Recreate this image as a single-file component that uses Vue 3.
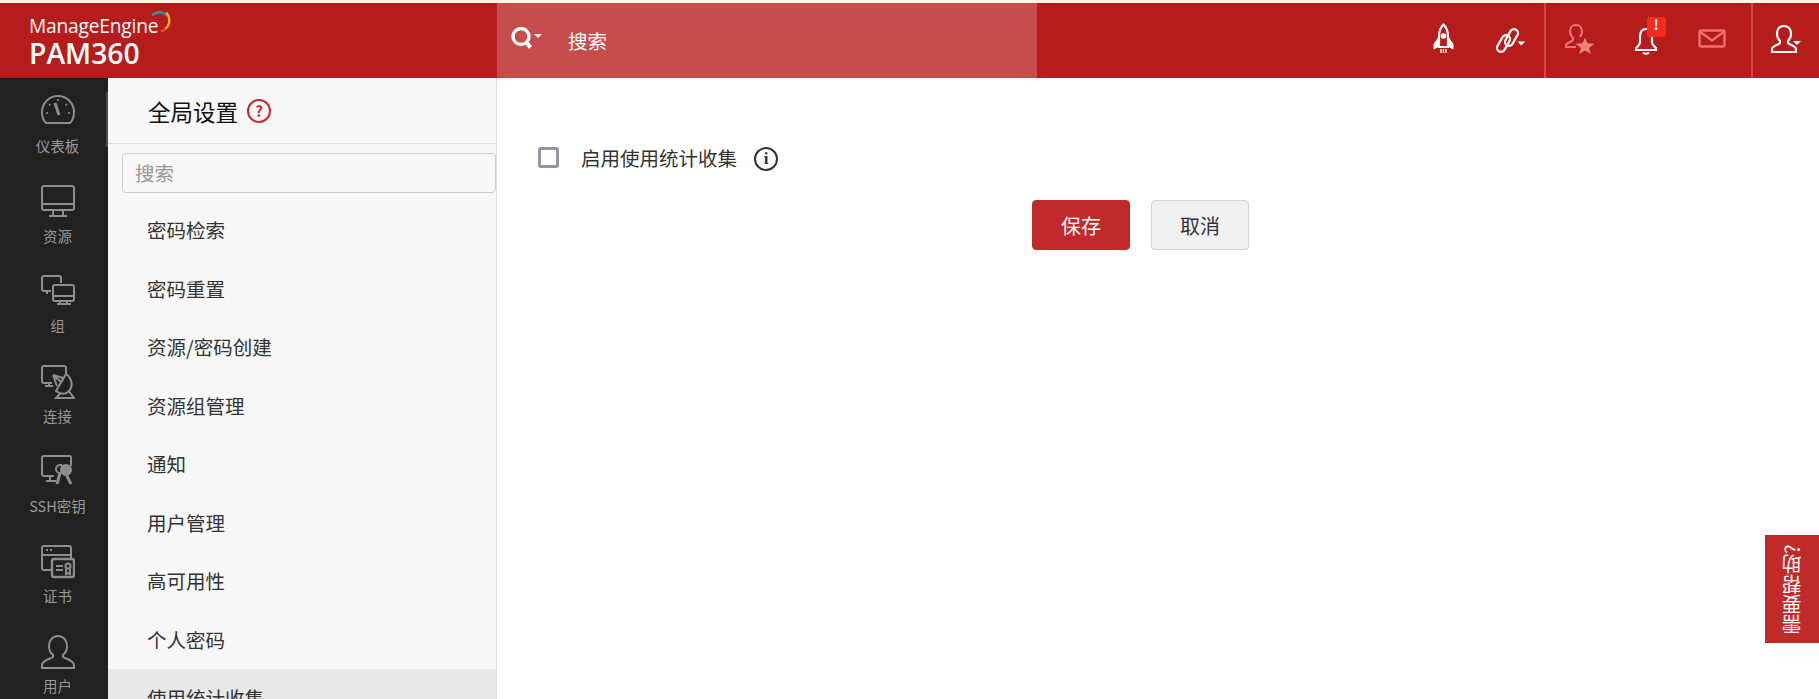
<script setup>
const navItems = [
  { key: 'dashboard', label: '仪表板' },
  { key: 'resource', label: '资源' },
  { key: 'group', label: '组' },
  { key: 'connect', label: '连接' },
  { key: 'ssh', label: 'SSH密钥' },
  { key: 'cert', label: '证书' },
  { key: 'user', label: '用户' },
];

const menuItems = [
  '密码检索',
  '密码重置',
  '资源/密码创建',
  '资源组管理',
  '通知',
  '用户管理',
  '高可用性',
  '个人密码',
  '使用统计收集',
];
</script>

<template>
  <div class="page">
    <div class="notice-strip" />

    <header class="topbar">
      <div class="logo">
        <div class="logo__brand">
          <span>ManageEngine</span>
          <svg class="logo__arc" viewBox="0 0 20 22" width="20" height="22" fill="none" stroke-width="2.400" aria-hidden="true">
            <path d="M1 4C4 1.500 8 .8 11 1.500" stroke="#3c9a94" />
            <path d="M11 1.500C13 2.200 14.500 3.500 15.500 5" stroke="#3f78c4" />
            <path d="M15 1.500C19.500 6 19.500 14 14 18" stroke="#f0b323" />
            <path d="M14.500 17.500C13.500 18.800 12 19.800 10 20.500" stroke="#e0532a" />
          </svg>
        </div>
        <div class="logo__product">PAM360</div>
      </div>

      <div class="global-search">
        <svg class="global-search__icon" viewBox="0 0 32 22" width="32" height="22" aria-hidden="true">
          <circle cx="10" cy="9.500" r="8" fill="none" stroke="#fff" stroke-width="3.400" />
          <path d="M15 15l4.500 5.500" stroke="#fff" stroke-width="4" />
          <path d="M23 7h8l-4 4z" fill="#fff" />
        </svg>
        <span>搜索</span>
      </div>

      <div class="topbar__spacer" />

      <div class="tool-group">
        <div class="tool">
          <svg viewBox="0 0 24 32" width="24" height="32" fill="none" stroke="#fff" stroke-width="2.200" aria-hidden="true">
            <path d="M12.500 1.500C9 5 8 9 8 13v11h9V13c0-4-1-8-4.500-11.500z" />
            <circle cx="12.500" cy="13" r="2.800" fill="#fff" stroke="none" />
            <path d="M8 14l-5 7v5l5-3zM17 14l5 7v5l-5-3z" fill="#fff" stroke-width="1" />
            <path d="M10 26v4M12.500 26v4M15 26v4" stroke-width="1.400" />
          </svg>
        </div>
        <div class="tool">
          <svg viewBox="0 0 34 32" width="34" height="32" aria-hidden="true">
            <g transform="translate(4.500 4.500)" fill="none" stroke="#fff" stroke-width="2.200">
              <rect x="12" y="1" width="8" height="18" rx="4" transform="rotate(30 16 10)" />
              <rect x="4" y="7" width="8" height="18" rx="4" transform="rotate(30 8 16)" />
            </g>
            <path d="M26.500 18.500h7.500l-3.750 4z" fill="#fff" />
          </svg>
        </div>
      </div>

      <div class="tool-group tool-group--mid">
        <div class="tool">
          <svg viewBox="0 0 32 32" width="32" height="32" fill="none" stroke="#ec7272" stroke-width="2.200" aria-hidden="true">
            <path d="M13 24H3v-2c0-2 6-3.500 7-5v-2c-2-2-3-4-3-7 0-3 2-6 6-6s6 3 6 6c0 3-1 4-2 6" />
            <path d="M22 14.500l2.500 5.800 7 .5-5.500 4.200 2 6-6-3.500-6 3.500 2-6-5.500-4.200 7-.5z" fill="#f08282" stroke="none" />
          </svg>
        </div>
        <div class="tool">
          <svg viewBox="0 0 24 32" width="24" height="32" fill="none" stroke="#fff" stroke-width="2.200" aria-hidden="true">
            <path d="M12 6C7 6 6 10 6 14v5c0 3-2 4-4 6v2h20v-2c-2-2-4-3-4-6v-5c0-4-1-8-6-8z" />
            <path d="M9 29.500c1 1.500 5 1.500 6 0" stroke-width="2" />
          </svg>
          <span class="tool__badge">!</span>
        </div>
        <div class="tool">
          <svg viewBox="0 0 28 20" width="28" height="20" fill="none" stroke="#ec7272" stroke-width="2.400" aria-hidden="true">
            <rect x="1.500" y="1.500" width="25" height="16" rx="1.500" />
            <path d="M2.500 3l11.500 8.500L25.500 3" />
          </svg>
        </div>
      </div>

      <div class="tool-group tool-group--end">
        <div class="tool">
          <svg viewBox="0 0 32 28" width="32" height="28" fill="none" stroke="#fff" stroke-width="2.200" aria-hidden="true">
            <path d="M14 1c-5 0-7 4-7 8 0 3 1 5 3 7v2c0 1-8 3-8 6v3h24v-3c0-3-8-5-8-6v-2c2-2 3-4 3-7 0-4-2-8-7-8z" />
            <path d="M23 16h8l-4 4z" fill="#fff" stroke="none" />
          </svg>
        </div>
      </div>
    </header>

    <div class="body">
      <nav class="rail">
        <span class="rail__edge" />
        <a v-for="item in navItems" :key="item.key" class="rail__item">
          <svg class="rail__icon" viewBox="0 0 34 34" width="34" height="34" fill="none" stroke="#8e8e8e" stroke-width="2" aria-hidden="true">
            <template v-if="item.key === 'dashboard'">
              <path d="M5 28C2 25 1 21 1 17A16 16 0 0 1 33 17C33 21 32 25 29 28Z" />
              <path d="M14 8l4 12" stroke-width="3" />
              <path d="M17 4v2M8 9l1.500 1.500M26 9l-1.500 1.500M5 18h2M27 18h2" stroke-width="1.500" />
            </template>
            <template v-else-if="item.key === 'resource'">
              <rect x="1" y="1" width="32" height="24" rx="2" />
              <path d="M1 19h32M12 25v6M22 25v6M8 31h18" />
            </template>
            <template v-else-if="item.key === 'group'">
              <path d="M10 16H3c-1 0-2-1-2-2V3c0-1 1-2 2-2h15c1 0 2 1 2 2v5" />
              <path d="M6 16v3" />
              <rect x="12" y="10" width="21" height="16" rx="2" />
              <path d="M12 21h21M19 26v3M26 26v3M16 29h14" />
            </template>
            <template v-else-if="item.key === 'connect'">
              <path d="M11 18H3c-1 0-2-1-2-2V3c0-1 1-2 2-2h20c1 0 2 1 2 2v6" />
              <path d="M8 18v3M4 21h8" />
              <path d="M25 9C31 13 33 22 27 27C23 30 19 29 15 26Z" />
              <path d="M12 10l8 7M12 10l10 3M12 10l4 11" />
              <path d="M19 29l-4 4h18l-6-8" />
            </template>
            <template v-else-if="item.key === 'ssh'">
              <path d="M13 21H3c-1 0-2-1-2-2V3c0-1 1-2 2-2h26c1 0 1 1 1 2v8" />
              <path d="M9 22v4M5 26h10" />
              <circle cx="19" cy="14" r="4" />
              <circle cx="25" cy="15" r="5" fill="#8e8e8e" />
              <path d="M19 18l-3 11M25 19l5 10" stroke-width="3" />
            </template>
            <template v-else-if="item.key === 'cert'">
              <path d="M11 25H3c-1 0-2-1-2-2V3c0-1 1-2 2-2h25c1 0 2 1 2 2v11" />
              <path d="M1 10h29M5 5h2M9 5h2" />
              <rect x="11" y="14" width="22" height="18" rx="2" stroke-width="2.400" />
              <path d="M15 21h7M15 25h7" />
              <circle cx="27" cy="21" r="2.500" />
              <path d="M25 24v5l2-1 2 1v-5" />
            </template>
            <template v-else>
              <path d="M17 1c-6 0-9 5-9 10 0 4 1.500 7 4 9v2c0 1-11 3-11 8v3h32v-3c0-5-11-7-11-8v-2c2.500-2 4-5 4-9 0-5-3-10-9-10z" />
            </template>
          </svg>
          <span class="rail__label">{{ item.label }}</span>
        </a>
      </nav>

      <aside class="settings">
        <div class="settings__head">
          <h1>全局设置</h1>
          <span class="settings__help">?</span>
        </div>
        <div class="settings__search">搜索</div>
        <ul class="settings__menu">
          <li
            v-for="(item, index) in menuItems"
            :key="item"
            :class="{ 'is-active': index === menuItems.length - 1 }"
          >
            {{ item }}
          </li>
        </ul>
      </aside>

      <main class="content">
        <label class="usage-row">
          <span class="usage-row__box" />
          <span class="usage-row__text">启用使用统计收集</span>
          <span class="usage-row__info">i</span>
        </label>
        <div class="actions">
          <button class="btn btn--primary" type="button">保存</button>
          <button class="btn" type="button">取消</button>
        </div>
      </main>
    </div>

    <div class="feedback-tab">需要帮助?</div>
  </div>
</template>

<style>
html,
body {
  margin: 0;
  overflow: hidden;
  background: #ffffff;
}
</style>

<style scoped>
.page {
  position: relative;
  height: 699px;
  overflow: hidden;
  font-family: "Noto Sans CJK SC", "Noto Sans", sans-serif;
}

.notice-strip {
  height: 3px;
  background: #fdf8e2;
}

.topbar {
  display: flex;
  height: 75px;
  background: #b51c1b;
}

.logo {
  width: 497px;
  padding: 10px 0 0 29px;
  box-sizing: border-box;
  color: #ffffff;
}

.logo__brand {
  display: flex;
  align-items: flex-start;
  height: 25px;
  font-family: "Open Sans", sans-serif;
  font-size: 19.200px;
  line-height: 25px;
  letter-spacing: -0.200px;
}

.logo__arc {
  flex: none;
  margin: -2px 0 0 -7px;
}

.logo__product {
  font-family: "Open Sans", sans-serif;
  font-size: 28.300px;
  line-height: 30px;
  font-weight: 600;
}

.global-search {
  display: flex;
  align-items: center;
  width: 540px;
  padding-left: 14px;
  box-sizing: border-box;
  background: #c74d4c;
  color: #ffffff;
  font-size: 19.500px;
}

.global-search__icon {
  margin: -6px 25px 0 0;
}

.topbar__spacer {
  flex: 1;
}

.tool-group {
  display: flex;
  padding-right: 4px;
}

.tool-group--mid {
  width: 207px;
  padding: 0;
  box-sizing: border-box;
  border-left: 2px solid #cb4a48;
}

.tool-group--end {
  width: 68px;
  padding: 0;
  box-sizing: border-box;
  border-left: 2px solid #cb4a48;
}

.tool {
  position: relative;
  display: flex;
  align-items: center;
  justify-content: center;
  width: 65px;
  padding-bottom: 4px;
  box-sizing: border-box;
}

.tool-group--mid .tool {
  width: 66.500px;
}

.tool-group--end .tool {
  width: 66px;
}

.tool__badge {
  position: absolute;
  top: 14px;
  left: 34.500px;
  width: 19px;
  height: 20px;
  border-radius: 2px;
  background: #f42c1c;
  color: #ffffff;
  font-size: 14px;
  font-weight: 700;
  line-height: 15px;
  text-align: center;
  text-indent: -1px;
}

.body {
  display: flex;
  height: 621px;
}

.rail {
  position: relative;
  flex: 0 0 108px;
  padding-left: 7px;
  box-sizing: border-box;
  background: #212121;
}

.rail__edge {
  position: absolute;
  top: 14px;
  right: 0;
  width: 2px;
  height: 55px;
  background: #4c4c4c;
}

.rail__item {
  display: flex;
  flex-direction: column;
  align-items: center;
  height: 90px;
  padding-top: 17px;
  box-sizing: border-box;
}

.rail__icon {
  display: block;
  flex: none;
}

.rail__label {
  margin-top: 7px;
  color: #999999;
  font-size: 14.500px;
  line-height: 20px;
  white-space: nowrap;
}

.settings {
  flex: 0 0 389px;
  box-sizing: border-box;
  border-right: 1px solid #dddddd;
  background: #f7f7f7;
}

.settings__head {
  display: flex;
  align-items: center;
  height: 66px;
  padding-left: 40px;
  box-sizing: border-box;
  border-bottom: 1px solid #dfdfdf;
}

.settings__head h1 {
  margin: 0;
  color: #111111;
  font-size: 22.500px;
  font-weight: 400;
}

.settings__help {
  width: 20px;
  height: 20px;
  margin-left: 9px;
  border: 2px solid #c62b2b;
  border-radius: 50%;
  color: #c62b2b;
  font-size: 15px;
  font-weight: 700;
  line-height: 20px;
  text-align: center;
}

.settings__search {
  height: 40px;
  margin: 9px 0 0 14px;
  padding-left: 12px;
  box-sizing: border-box;
  border: 1px solid #cccccc;
  border-radius: 4px;
  color: #999999;
  font-size: 19.500px;
  line-height: 37px;
}

.settings__menu {
  margin: 8px 0 0;
  padding: 0;
  list-style: none;
}

.settings__menu li {
  height: 58.500px;
  padding-left: 39px;
  color: #333333;
  font-size: 19.500px;
  line-height: 58px;
}

.settings__menu li.is-active {
  background: #e8e8e8;
}

.content {
  flex: 1;
  padding: 67px 0 0 41px;
}

.usage-row {
  display: flex;
  align-items: center;
  height: 24px;
}

.usage-row__box {
  width: 21px;
  height: 21px;
  box-sizing: border-box;
  border: 3px solid #9494a4;
  border-radius: 3px;
  background: #ffffff;
}

.usage-row__text {
  margin-left: 22px;
  color: #333333;
  font-size: 19.500px;
}

.usage-row__info {
  width: 20px;
  height: 20px;
  margin-top: 3px;
  margin-left: 17px;
  border: 2px solid #333333;
  border-radius: 50%;
  color: #333333;
  font-family: "Liberation Serif", serif;
  font-size: 17px;
  font-weight: 700;
  line-height: 20px;
  text-align: center;
}

.actions {
  display: flex;
  gap: 21px;
  margin: 31px 0 0 494px;
}

.btn {
  width: 98px;
  height: 50px;
  padding: 0;
  border: 1px solid #d4d4d4;
  border-radius: 4px;
  background: #f0f0f0;
  color: #333333;
  font-family: inherit;
  font-size: 20px;
}

.btn--primary {
  border-color: #c02a2a;
  background: #c02a2a;
  color: #ffffff;
}

.feedback-tab {
  position: absolute;
  top: 535px;
  right: 0;
  width: 54px;
  height: 108px;
  background: #c02a2a;
  color: #ffffff;
  font-size: 20px;
  line-height: 54px;
  text-align: center;
  white-space: nowrap;
  writing-mode: vertical-rl;
  transform: rotate(180deg);
}
</style>
